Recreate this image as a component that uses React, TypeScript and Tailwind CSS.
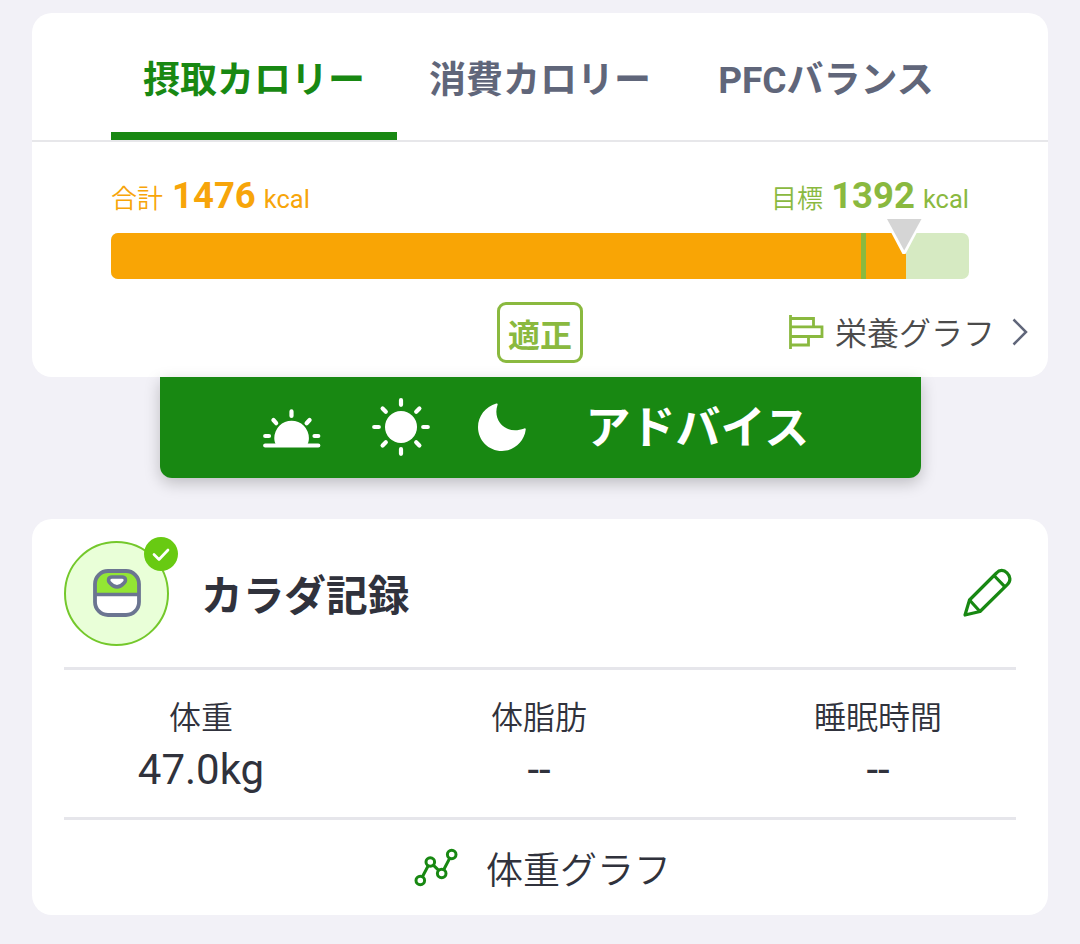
import React from 'react';

const tabs = [
  { label: '摂取カロリー', active: true },
  { label: '消費カロリー', active: false },
  { label: 'PFCバランス', active: false },
];

const records = [
  { label: '体重', value: '47.0kg' },
  { label: '体脂肪', value: '--' },
  { label: '睡眠時間', value: '--' },
];

function Sunrise() {
  return (
    <svg width="60" height="46" viewBox="0 0 60 46" fill="none" stroke="#fff" strokeWidth="4.2" strokeLinecap="round">
      <path d="M14.3 38C12.5 35.500 12.300 33 12.300 31a17.300 17.300 0 0 1 34.600 0C46.900 33 46.700 35.500 45 38Z" fill="#fff" stroke="none" />
      <path d="M3.200 38.500H56.300M3.200 29H7M52.500 29H56.300M29.500 4.400V9M11.400 13L14.200 16.200M47.600 13L44.600 16.200" />
    </svg>
  );
}

function Sun() {
  return (
    <svg width="60" height="60" viewBox="0 0 60 60" fill="none" stroke="#fff" strokeWidth="4.2" strokeLinecap="round">
      <circle cx="30" cy="30" r="16" fill="#fff" stroke="none" />
      <path d="M30 3.200V7.800M30 52.200V56.800M3.200 30H7.800M52.200 30H56.800M11.600 11.600L14.800 14.800M48.400 11.600L45.200 14.800M11.600 48.400L14.800 45.200M48.400 48.400L45.200 45.200" />
    </svg>
  );
}

function Moon() {
  return (
    <svg width="48" height="48" viewBox="0 0 48 48" fill="#fff">
      <path d="M18.300 0.600C19.500 0.200 20 .9 19.500 2C14.300 17.500 27.500 32.500 46.300 25.500C47.300 25.100 47.900 25.600 47.700 26.800C46.200 39 35.500 48 24 48C10.500 48 0 37.300 0 24C0 13.500 7.500 3.500 18.300 .6Z" />
    </svg>
  );
}

function BarsIcon() {
  return (
    <svg width="36" height="36" viewBox="0 0 36 36" fill="none" stroke="#8ab93f" strokeWidth="2.800">
      <path d="M2.500 1V35M2.500 4.500H25.500V12.800M2.500 12.800H34V22.500H2.500M20.500 22.500V31H2.500" />
    </svg>
  );
}

function ScaleIcon() {
  return (
    <svg width="48" height="48" viewBox="0 0 48 48" fill="none">
      <rect x="2" y="2" width="44" height="44" rx="13" fill="#fff" />
      <path d="M2 25V15A13 13 0 0 1 15 2H33A13 13 0 0 1 46 15V25Z" fill="#93e634" />
      <path d="M2 25.500H46" stroke="#6b7591" strokeWidth="3.600" />
      <rect x="2" y="2" width="44" height="44" rx="13" stroke="#6b7591" strokeWidth="3.800" />
      <path d="M19 8H29C33 8 33.500 12 30.500 14.500C26.500 19 21.500 19 17.500 14.500C14.500 12 15 8 19 8Z" fill="#fff" stroke="#6b7591" strokeWidth="3.600" />
    </svg>
  );
}

function Pencil() {
  return (
    <svg width="50" height="50" viewBox="0 0 50 50" fill="none" stroke="#188812" strokeWidth="3.200" strokeLinejoin="round">
      <path d="M3 47L7.500 32L34.500 5C37.500 1.500 42 1.800 45 4.800C48.500 8.200 49 13 45.500 16.300L18 43.500Z" />
      <path d="M7.500 32L18 43.500M32 7.500L43 18.800" />
    </svg>
  );
}

function LineGraph() {
  return (
    <svg width="44" height="40" viewBox="0 0 44 40" fill="none" stroke="#188812" strokeWidth="3">
      <circle cx="6.300" cy="32.500" r="4.300" />
      <circle cx="16.300" cy="14" r="4.300" />
      <circle cx="27.700" cy="25.500" r="4.300" />
      <circle cx="37.700" cy="6.500" r="4.300" />
      <path d="M8.400 28.700L14.200 17.800M19.300 17.100L24.700 22.400M29.700 21.700L35.700 10.300" />
    </svg>
  );
}

export default function App() {
  return (
    <main className="flex h-[944px] w-[1080px] flex-col bg-[#f2f1f7] px-8 pt-[13px] font-[Roboto,'Noto_Sans_CJK_JP',sans-serif] text-[#30323c]">
      <section className="h-[364px] rounded-[20px] bg-white">
        <nav className="flex h-[129px] border-b-2 border-[#e7e7ea] px-[79px]">
          {tabs.map((tab) => (
            <button
              key={tab.label}
              className={
                tab.active
                  ? 'h-[127px] w-[286px] border-b-8 border-[#188812] pt-[17px] text-[37px] font-bold text-[#188812]'
                  : 'h-[127px] w-[286px] border-b-8 border-transparent pt-[17px] text-[37px] font-bold text-[#60667a]'
              }
            >
              {tab.label}
            </button>
          ))}
        </nav>

        <div className="px-[79px]">
          <div className="flex h-[91px] items-end justify-between pb-[9px]">
            <p className="flex items-baseline text-[26px] leading-[50px] text-[#f7a50a]">
              <span className="font-[350]">合計</span>
              <b className="ml-[9px] mr-2 text-[36.500px]">1476</b>
              <span className="text-[25.500px]">kcal</span>
            </p>
            <p className="flex items-baseline text-[26px] leading-[50px] text-[#8ab93f]">
              <span className="font-[350]">目標</span>
              <b className="ml-[8px] mr-2 text-[36.500px]">1392</b>
              <span className="text-[25.500px]">kcal</span>
            </p>
          </div>
          <div className="relative h-[46px]">
            <div className="flex h-full overflow-hidden rounded-[7px] bg-[#d6eac2]">
              <div className="w-[750px] bg-[#f9a505]" />
              <div className="w-[5px] bg-[#8ab93f]" />
              <div className="w-[40px] bg-[#f9a505]" />
            </div>
            <svg className="absolute -top-[14px] left-[773px]" width="40" height="38" viewBox="0 0 40 38">
              <path d="M0 0L18.500 35H21.500L40 0Z" fill="#fff" />
              <path d="M3 0H37.500L20.200 31.500Z" fill="#d5d5d5" />
            </svg>
          </div>
        </div>

        <div className="grid h-[98px] grid-cols-[1fr_86px_1fr] items-center pt-[8px]">
          <span />
          <span className="flex h-[61px] items-center justify-center rounded-[9px] border-3 border-[#8ab93f] pt-[8px] text-[32px] font-bold leading-none text-[#8ab93f]">
            適正
          </span>
          <a className="flex items-center justify-end pr-5 text-[32px] leading-[40px] text-[#4b4b4b]">
            <BarsIcon />
            <span className="ml-[11px] pt-[4px] font-[350]">栄養グラフ</span>
            <svg className="ml-[17px]" width="16" height="30" viewBox="0 0 16 30" fill="none" stroke="#60667a" strokeWidth="2.500">
              <path d="M1.500 2.500L14 15L1.500 27.500" />
            </svg>
          </a>
        </div>
      </section>

      <button className="mx-auto flex h-[101px] w-[761px] shrink-0 items-center rounded-b-[12px] bg-[#188812] text-white shadow-[0_5px_16px_rgba(0,0,0,0.22)]">
        <span className="ml-[102px] flex w-[60px] pt-[4px]"><Sunrise /></span>
        <span className="ml-[49px] flex pb-px"><Sun /></span>
        <span className="ml-[47px] flex pb-[2px]"><Moon /></span>
        <span className="ml-[60px] pt-[2px] text-[45px] font-bold leading-[60px]">アドバイス</span>
      </button>

      <section className="mt-[41px] h-[396px] rounded-[20px] bg-white">
        <div className="mx-8 flex h-[151px] items-center border-b-3 border-[#e6e6eb]">
          <div className="relative flex size-[105px] items-center justify-center rounded-full border-[2.500px] border-[#74c82b] bg-[#e9ffd8]">
            <ScaleIcon />
            <svg className="absolute -right-[11px] -top-[6px]" width="34" height="34" viewBox="0 0 34 34" fill="none">
              <circle cx="17" cy="17" r="17" fill="#68ca12" />
              <path d="M10 17.500L15 22.500L24 13" stroke="#fff" strokeWidth="2.700" strokeLinecap="round" strokeLinejoin="round" />
            </svg>
          </div>
          <h2 className="ml-[32px] pt-[8px] text-[41.700px] font-bold">カラダ記録</h2>
          <span className="ml-auto mr-[4px]"><Pencil /></span>
        </div>
        <div className="grid h-[147px] grid-cols-[338px_338px_340px] pt-6 text-center">
          {records.map((item) => (
            <div key={item.label}>
              <p className="text-[32px] font-[350] leading-[48px]">{item.label}</p>
              <p className="text-[42px] leading-[56px]">{item.value}</p>
            </div>
          ))}
        </div>
        <a className="mx-8 flex h-[98px] items-center border-t-3 border-[#e6e6eb] pl-[350px]">
          <LineGraph />
          <span className="ml-[28px] pt-[9px] text-[37px] font-[350]">体重グラフ</span>
        </a>
      </section>
    </main>
  );
}
